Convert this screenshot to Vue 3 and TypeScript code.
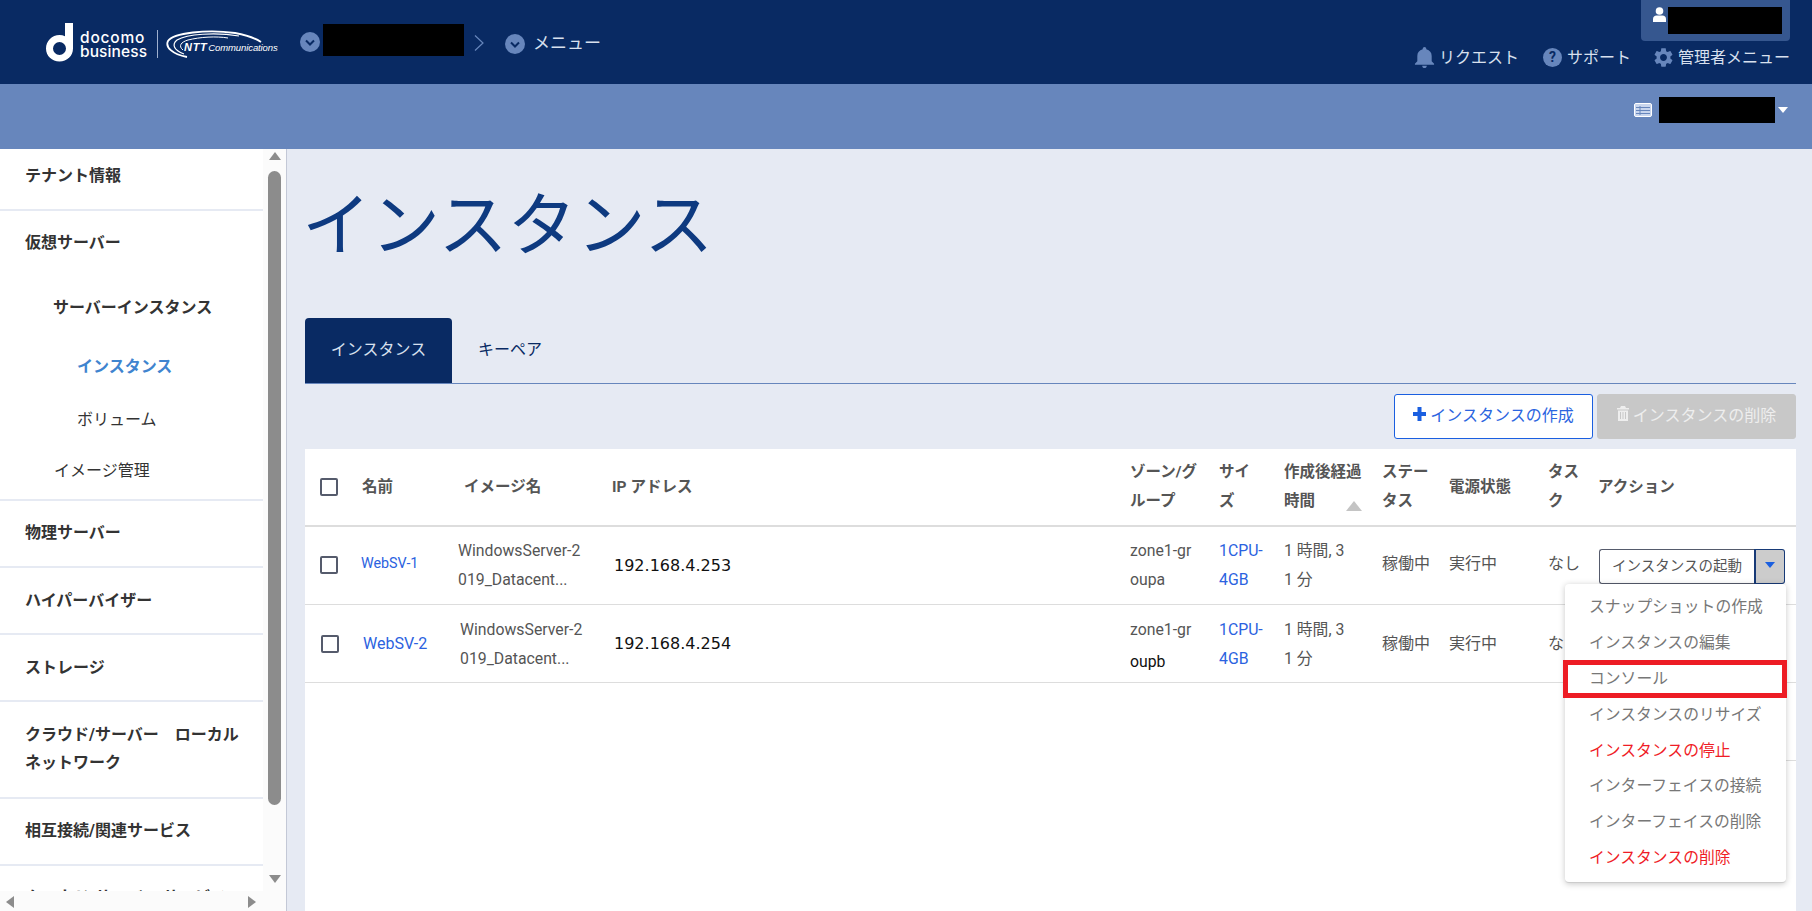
<script setup lang="ts">
interface Row {
  name: string
  image: string[]
  ip: string
  zone: string[]
  size: string[]
  age: string[]
  status: string
  power: string
  task: string
}

const rows: Row[] = [
  {
    name: 'WebSV-1',
    image: ['WindowsServer-2', '019_Datacent...'],
    ip: '192.168.4.253',
    zone: ['zone1-gr', 'oupa'],
    size: ['1CPU-', '4GB'],
    age: ['1 時間, 3', '1 分'],
    status: '稼働中',
    power: '実行中',
    task: 'なし',
  },
  {
    name: 'WebSV-2',
    image: ['WindowsServer-2', '019_Datacent...'],
    ip: '192.168.4.254',
    zone: ['zone1-gr', 'oupb'],
    size: ['1CPU-', '4GB'],
    age: ['1 時間, 3', '1 分'],
    status: '稼働中',
    power: '実行中',
    task: 'なし',
  },
]

const menu = [
  { label: 'スナップショットの作成', danger: false },
  { label: 'インスタンスの編集', danger: false },
  { label: 'コンソール', danger: false },
  { label: 'インスタンスのリサイズ', danger: false },
  { label: 'インスタンスの停止', danger: true },
  { label: 'インターフェイスの接続', danger: false },
  { label: 'インターフェイスの削除', danger: false },
  { label: 'インスタンスの削除', danger: true },
]

const sections = ['物理サーバー', 'ハイパーバイザー', 'ストレージ']
</script>

<template>
  <div class="page">
    <header class="top">
      <div class="brand">
        <svg class="d-mark" width="28" height="39" viewBox="0 0 28 39">
          <path fill="#fff" fill-rule="evenodd" d="M19 0h8v25.5C27 33 21 38.500 13.500 38.500S0 33 0 25.500 6 12 13.500 12c2 0 3.800.4 5.500 1.200V0zM13.500 19a6.500 6.500 0 1 0 0 13 6.500 6.500 0 0 0 0-13z" />
        </svg>
        <div class="wordmark"><span class="w1">docomo</span><span class="w2">business</span></div>
        <i class="brand-rule"></i>
        <div class="ntt">
          <svg class="swoosh" width="98" height="29" viewBox="0 0 98 29">
            <path fill="none" stroke="#fff" stroke-width="1.800" d="M22 27C7 24 0 17 3 11 8 3 42-1 70 3c11 2 20 5 26 9" />
            <path fill="none" stroke="#fff" stroke-width="1.200" d="M19 24C8 20 7 14 12 10 22 4 50 2 74 6" />
            <path fill="none" stroke="#fff" stroke-width="1" d="M18 20c-5-4-2-8 5-10 12-3 28-4 40-2" />
          </svg>
          <span class="ntt-text"><b>NTT</b><em>Communications</em></span>
        </div>
      </div>
      <div class="crumbs">
        <svg class="chev first" width="20" height="20" viewBox="0 0 20 20">
          <circle cx="10" cy="10" r="10" fill="#6786bc" />
          <path d="M6 8.500l4 4 4-4" fill="none" stroke="#092a63" stroke-width="2" />
        </svg>
        <span class="mask mask-tenant"></span>
        <svg class="sep" width="10" height="16" viewBox="0 0 10 16">
          <path d="M1 .5l8 7.500-8 7.500" fill="none" stroke="#6786bc" stroke-width="1.200" />
        </svg>
        <svg class="chev second-chev" width="20" height="20" viewBox="0 0 20 20">
          <circle cx="10" cy="10" r="10" fill="#6786bc" />
          <path d="M6 8.500l4 4 4-4" fill="none" stroke="#092a63" stroke-width="2" />
        </svg>
        <span class="crumb-label">メニュー</span>
      </div>
      <div class="top-right">
        <div class="user">
          <svg width="13" height="15" viewBox="0 0 13 15">
            <circle cx="6.500" cy="4" r="3.800" fill="#fff" />
            <path fill="#fff" d="M0 15v-3c0-2 1.500-3.500 3.500-3.500h6c2 0 3.500 1.500 3.500 3.500v3z" />
          </svg>
          <span class="mask mask-user"></span>
        </div>
        <nav class="top-nav">
          <span class="nav-item bell-item">
            <svg width="23" height="23" viewBox="0 0 24 24"><path fill="#6786bc" d="M12 23c1.300 0 2.400-1 2.400-2.400H9.600C9.600 22 10.700 23 12 23zm7.500-7v-5.500c0-3.500-2-6.200-5.600-7V3c0-1-.9-1.900-1.900-1.900s-1.900.9-1.900 1.900v.5c-3.600.8-5.600 3.500-5.600 7V16L2 18.500v1h20v-1z" /></svg>
            リクエスト
          </span>
          <span class="nav-item">
            <span class="help">?</span>
            サポート
          </span>
          <span class="nav-item gear-item">
            <svg width="23" height="23" viewBox="0 0 24 24"><path fill="#6786bc" d="M19.140 12.940c.04-.3.06-.61.06-.94 0-.32-.02-.64-.07-.94l2.030-1.580c.18-.14.23-.41.12-.61l-1.920-3.320c-.12-.22-.37-.29-.59-.22l-2.390.96c-.5-.38-1.030-.7-1.620-.94l-.36-2.540c-.04-.24-.24-.41-.48-.41h-3.840c-.24 0-.43.17-.47.41l-.36 2.540c-.59.24-1.130.57-1.620.94l-2.390-.96c-.22-.08-.47 0-.59.22L2.740 8.870c-.12.21-.08.47.12.61l2.030 1.580c-.05.3-.09.63-.09.94s.02.64.07.94l-2.030 1.580c-.18.14-.23.41-.12.61l1.920 3.320c.12.22.37.29.59.22l2.390-.96c.5.38 1.030.7 1.620.94l.36 2.540c.05.24.24.41.48.41h3.840c.24 0 .44-.17.47-.41l.36-2.540c.59-.24 1.130-.56 1.620-.94l2.390.96c.22.08.47 0 .59-.22l1.920-3.320c.12-.22.07-.47-.12-.61l-2.010-1.580zM12 15.600c-1.980 0-3.600-1.620-3.600-3.600s1.620-3.600 3.600-3.600 3.600 1.620 3.600 3.600-1.620 3.600-3.600 3.600z" /></svg>
            管理者メニュー
          </span>
        </nav>
      </div>
    </header>

    <div class="subbar">
      <svg width="18" height="14" viewBox="0 0 18 14">
        <rect x=".5" y=".5" width="17" height="13" rx="1.500" fill="#c9d6ee" stroke="#fff" />
        <path d="M2 4.500h14M2 7.500h14M2 10.500h14M6 3v9" stroke="#6786bc" stroke-width="1" fill="none" />
      </svg>
      <span class="mask mask-project"></span>
      <svg width="10" height="6" viewBox="0 0 10 6"><path d="M0 0h10L5 6z" fill="#fff" /></svg>
    </div>

    <div class="body">
      <aside class="side">
        <div class="side-nav">
          <div class="sec first-sec"><b>テナント情報</b></div>
          <div class="sec virt">
            <b>仮想サーバー</b>
            <b class="lvl2">サーバーインスタンス</b>
            <b class="lvl3 active">インスタンス</b>
            <span class="lvl3 vol">ボリューム</span>
            <span class="lvl2 img">イメージ管理</span>
          </div>
          <div v-for="s in sections" :key="s" class="sec low"><b>{{ s }}</b></div>
          <div class="sec two"><b>クラウド/サーバー　ローカル<br />ネットワーク</b></div>
          <div class="sec"><b>相互接続/関連サービス</b></div>
          <div class="sec"><b>クラウド/サーバー サービス</b></div>
          <div class="hbar">
            <i class="tri-left"></i>
            <i class="tri-right"></i>
          </div>
        </div>
        <div class="vbar">
          <i class="tri-up"></i>
          <i class="thumb"></i>
          <i class="tri-down"></i>
        </div>
      </aside>

      <main class="main">
        <h1 class="title">インスタンス</h1>
        <div class="tabs">
          <span class="tab on">インスタンス</span>
          <span class="tab keys">キーペア</span>
        </div>
        <div class="tools">
          <button class="btn primary" type="button">
            <svg width="13" height="14" viewBox="0 0 13 14"><path d="M4.500 0h4v5H13v4H8.500v5h-4V9H0V5h4.500z" fill="#1a5fe0" /></svg>
            インスタンスの作成
          </button>
          <button class="btn off" type="button">
            <svg width="12" height="15" viewBox="0 0 12 15"><path fill="#eee" d="M4 0h4l1 2h3v1.500H0V2h3zM1 4.500h10V15H1zM3 6v7h1V6zm2.500 0v7h1V6zM8 6v7h1V6z" fill-rule="evenodd" /></svg>
            インスタンスの削除
          </button>
        </div>

        <section class="card">
          <div class="grid head">
            <div class="c"><span class="cb"></span></div>
            <div class="c">名前</div>
            <div class="c ind6">イメージ名</div>
            <div class="c">IP アドレス</div>
            <div class="c">ゾーン/グ<br />ループ</div>
            <div class="c">サイ<br />ズ</div>
            <div class="c sort">作成後経過<br />時間<i class="sort-tri"></i></div>
            <div class="c">ステー<br />タス</div>
            <div class="c">電源状態</div>
            <div class="c">タス<br />ク</div>
            <div class="c">アクション</div>
          </div>

          <div v-for="(r, i) in rows" :key="r.name" class="grid row" :class="{ second: i === 1 }">
            <div class="c box"><span class="cb"></span></div>
            <div class="c link name">{{ r.name }}</div>
            <div class="c two-line img-cell">{{ r.image[0] }}<br />{{ r.image[1] }}</div>
            <div class="c ip">{{ r.ip }}</div>
            <div class="c two-line zone">{{ r.zone[0] }}<br /><span class="zone2">{{ r.zone[1] }}</span></div>
            <div class="c two-line link">{{ r.size[0] }}<br />{{ r.size[1] }}</div>
            <div class="c two-line">{{ r.age[0] }}<br />{{ r.age[1] }}</div>
            <div class="c state">{{ r.status }}</div>
            <div class="c state">{{ r.power }}</div>
            <div class="c state">{{ r.task }}</div>
            <div class="c">
              <div v-if="i === 0" class="split">
                <span class="split-main">インスタンスの起動</span>
                <span class="split-caret"><svg width="10" height="6" viewBox="0 0 10 6"><path d="M0 0h10L5 6z" fill="#1a5fe0" /></svg></span>
              </div>
            </div>
          </div>

          <i class="row3-tail"></i>

          <div class="menu">
            <div v-for="m in menu" :key="m.label" class="menu-item" :class="{ danger: m.danger }">{{ m.label }}</div>
            <i class="callout"></i>
          </div>
        </section>
      </main>
    </div>
  </div>
</template>

<style>
html, body { margin: 0; overflow: hidden; }
</style>

<style scoped>
.page {
  height: 911px;
  display: flex;
  flex-direction: column;
  overflow: hidden;
  background: #e6eaf3;
  font-family: Roboto, "Noto Sans CJK JP", sans-serif;
  font-size: 16px;
  color: #555;
}
.mask { display: block; background: #000; }

.top {
  height: 84px;
  flex: none;
  display: flex;
  background: #092a63;
  color: #d8e0ee;
}
.brand { display: flex; align-items: flex-start; padding: 23px 0 0 46px; }
.d-mark { display: block; }
.wordmark {
  display: flex;
  flex-direction: column;
  margin: 8px 0 0 6px;
  font-family: Inter, sans-serif;
  font-weight: 500;
  font-size: 15.500px;
  line-height: 14px;
  color: #fff;
}
.w1 { letter-spacing: .8px; }
.w2 { letter-spacing: .1px; }
.brand-rule { width: 1px; height: 28px; margin: 7px 7px 0 10px; background: #9fb0cf; }
.ntt { position: relative; width: 112px; height: 29px; margin-top: 7px; }
.swoosh { display: block; }
.ntt-text {
  position: absolute;
  left: 19px;
  top: 10px;
  display: flex;
  align-items: baseline;
  color: #fff;
  font-family: "Liberation Sans", sans-serif;
  white-space: nowrap;
}
.ntt-text b { font-size: 11px; font-style: italic; font-weight: 900; line-height: 14px; letter-spacing: .6px; }
.ntt-text em { font-size: 9.500px; margin-left: 1px; letter-spacing: -.1px; }

.crumbs { display: flex; align-items: flex-start; margin-left: 23px; }
.chev { display: block; flex: none; }
.chev.first { margin-top: 32px; }
.chev.second-chev { margin: 34px 0 0 21px; }
.mask-tenant { width: 141px; height: 32px; margin: 24px 0 0 3px; }
.sep { margin: 35px 0 0 10px; flex: none; }
.crumb-label { margin: 31px 0 0 8px; font-size: 17px; line-height: 24px; }

.top-right { margin-left: auto; padding-right: 22px; display: flex; flex-direction: column; align-items: flex-end; }
.user {
  width: 149px;
  height: 41px;
  box-sizing: border-box;
  display: flex;
  align-items: flex-start;
  padding: 7px 0 0 12px;
  gap: 2px;
  background: #36578f;
  border-radius: 0 0 4px 4px;
}
.mask-user { width: 114px; height: 27px; }
.top-nav { display: flex; margin-top: 5px; gap: 21px; }
.nav-item { display: flex; align-items: center; gap: 5px; line-height: 22px; white-space: nowrap; }
.bell-item { gap: 3px; margin-right: 2px; }
.gear-item { gap: 3px; }
.help {
  width: 19px;
  height: 19px;
  margin-left: 1px;
  border-radius: 50%;
  background: #6786bc;
  color: #092a63;
  font-weight: 700;
  font-size: 14px;
  line-height: 19px;
  text-align: center;
}

.subbar {
  height: 65px;
  flex: none;
  box-sizing: border-box;
  display: flex;
  align-items: center;
  justify-content: flex-end;
  padding: 0 24px 13px 0;
  background: #6786bc;
}
.mask-project { width: 116px; height: 26px; margin: 0 3px 0 7px; }

.body { flex: 1; min-height: 0; display: flex; }

.side {
  width: 287px;
  flex: none;
  box-sizing: border-box;
  display: flex;
  border-right: 1px solid #c3c8d6;
  background: #fbfbfb;
  color: #333;
}
.side-nav { position: relative; width: 263px; flex: none; overflow: hidden; background: #fff; }
.sec {
  display: flex;
  flex-direction: column;
  align-items: flex-start;
  padding: 21px 25px 22px;
  border-bottom: 2px solid #e6eaf3;
  line-height: 22px;
  white-space: nowrap;
}
.sec b { font-weight: 700; }
.sec.low + .sec.low { padding: 22px 25px 21px; }
.first-sec { padding-top: 16px; }
.virt { padding-bottom: 17px; }
.lvl2 { margin: 43px 0 0 28px; }
.lvl3 { margin: 37px 0 0 52px; }
.active { color: #3f84cf; }
.vol { margin-top: 31px; }
.img { margin: 29px 0 0 29px; }
.two { padding: 19px 25px 20px; line-height: 28px; }

.hbar { position: absolute; left: 0; right: 0; bottom: 0; height: 20px; background: #fbfbfb; }
.tri-left, .tri-right { position: absolute; top: 5px; width: 0; height: 0; border-top: 6.500px solid transparent; border-bottom: 6.500px solid transparent; }
.tri-left { left: 6px; border-right: 8px solid #8c8c8c; }
.tri-right { right: 7px; border-left: 8px solid #8c8c8c; }

.vbar { width: 23px; flex: none; display: flex; flex-direction: column; align-items: center; padding: 3px 0 0; box-sizing: border-box; }
.tri-up, .tri-down { width: 0; height: 0; border-left: 6.500px solid transparent; border-right: 6.500px solid transparent; }
.tri-up { border-bottom: 8px solid #8c8c8c; }
.tri-down { border-top: 8px solid #8c8c8c; margin-top: 70px; }
.thumb { width: 13px; height: 634px; margin-top: 11px; border-radius: 7px; background: #8c8c8c; }

.main { flex: 1; min-width: 0; display: flex; flex-direction: column; padding: 0 16px 0 18px; }
.title {
  margin: 33px 0 46px -3px;
  font-size: 69px;
  font-weight: 400;
  line-height: 90px;
  color: #0e3a80;
  white-space: nowrap;
}
.tabs { display: flex; height: 65px; flex: none; border-bottom: 1px solid #6786bc; box-sizing: content-box; }
.tab {
  width: 147px;
  box-sizing: border-box;
  padding: 19px 0 0;
  line-height: 26px;
  text-align: center;
  color: #092a63;
  border-radius: 4px 4px 0 0;
}
.tab.keys { width: 116px; }
.tab.on { background: #092a63; color: #d8e0ee; }
.tools { display: flex; justify-content: flex-end; gap: 4px; margin-top: 10px; height: 45px; flex: none; }
.btn {
  width: 199px;
  display: flex;
  align-items: center;
  justify-content: center;
  gap: 4px;
  padding: 0 0 6px;
  font: inherit;
  border-radius: 3px;
  box-sizing: border-box;
  white-space: nowrap;
}
.primary { background: #fff; border: 1px solid #1a5fe0; color: #2b65e0; }
.off { background: #c8c8c8; border: 1px solid #c8c8c8; color: #eee; }

.card { position: relative; flex: 1; margin-top: 10px; background: #fff; }
.grid {
  display: grid;
  grid-template-columns: 57px 95px 155px 518px 89px 65px 98px 67px 99px 50px 198px;
  align-items: center;
}
.head { height: 76px; border-bottom: 2px solid #ddd; font-weight: 700; font-size: 15.500px; line-height: 29px; }
.head .c { white-space: nowrap; }
.ind6 { padding-left: 7px; }
.cb {
  display: block;
  width: 18px;
  height: 18px;
  margin-left: 15px;
  box-sizing: border-box;
  border: 2px solid #555b6c;
  border-radius: 2px;
}
.sort { position: relative; }
.sort-tri {
  position: absolute;
  right: 20px;
  bottom: 5px;
  width: 0;
  height: 0;
  border-left: 8.500px solid transparent;
  border-right: 8.500px solid transparent;
  border-bottom: 10px solid #c4c4c4;
}
.row { height: 77px; border-bottom: 1px solid #ddd; line-height: 29px; white-space: nowrap; font-size: 16px; }
.two-line { font-size: 15.800px; margin-top: -2px; }
.state { margin-top: -4px; }
.box { margin-top: -2px; }
.img-cell { padding-left: 1px; }
.link { color: #2b62e0; }
.name { font-size: 14.300px; margin: -5px 0 0 -1px; }
.ip { font-family: "DejaVu Sans", sans-serif; font-size: 16px; color: #111; padding-left: 2px; }
.second { padding-left: 1px; grid-template-columns: 57px 95px 155px 517px 89px 65px 98px 67px 99px 50px 198px; }
.second .name { font-size: 16px; margin: -1px 0 0; }
.second .img-cell { padding-left: 2px; }
.second .ip { padding-left: 1px; }
.second .two-line { margin-top: 0; }
.second .state { margin-top: 0; }
.second .box { margin-top: 0; }
.second .zone { padding-top: 1px; }
.second .zone2 { position: relative; top: 3px; color: #111; }
.split {
  display: flex;
  width: 186px;
  height: 35px;
  margin: 2px 0 0 1px;
  box-sizing: border-box;
}
.split-main {
  flex: 1;
  box-sizing: border-box;
  border: 1px solid #555b6c;
  border-right: none;
  border-radius: 3px 0 0 3px;
  text-align: center;
  font-size: 14.500px;
  line-height: 33px;
}
.split-caret {
  width: 31px;
  box-sizing: border-box;
  display: flex;
  align-items: center;
  justify-content: center;
  padding-bottom: 4px;
  background: #ccc;
  border: 1px solid #173a77;
  border-left-width: 2px;
  border-radius: 0 3px 3px 0;
}
.row3-tail { position: absolute; top: 311px; right: 0; width: 10px; height: 1px; background: #ddd; }
.menu {
  position: absolute;
  left: 1260px;
  top: 135px;
  width: 221px;
  height: 299px;
  box-sizing: border-box;
  padding: 5px 0;
  background: #fff;
  border-radius: 4px;
  border-bottom: 1px solid #ccc;
  box-shadow: 0 1px 6px rgba(0, 0, 0, .22);
}
.menu-item { height: 35.900px; padding-left: 24px; font-size: 15.800px; line-height: 35.900px; color: #777; white-space: nowrap; }
.menu-item.danger { color: #ef1c26; }
.callout {
  position: absolute;
  left: -2px;
  top: 76px;
  width: 224px;
  height: 38px;
  box-sizing: border-box;
  border: 5px solid #ed1c24;
}
</style>
